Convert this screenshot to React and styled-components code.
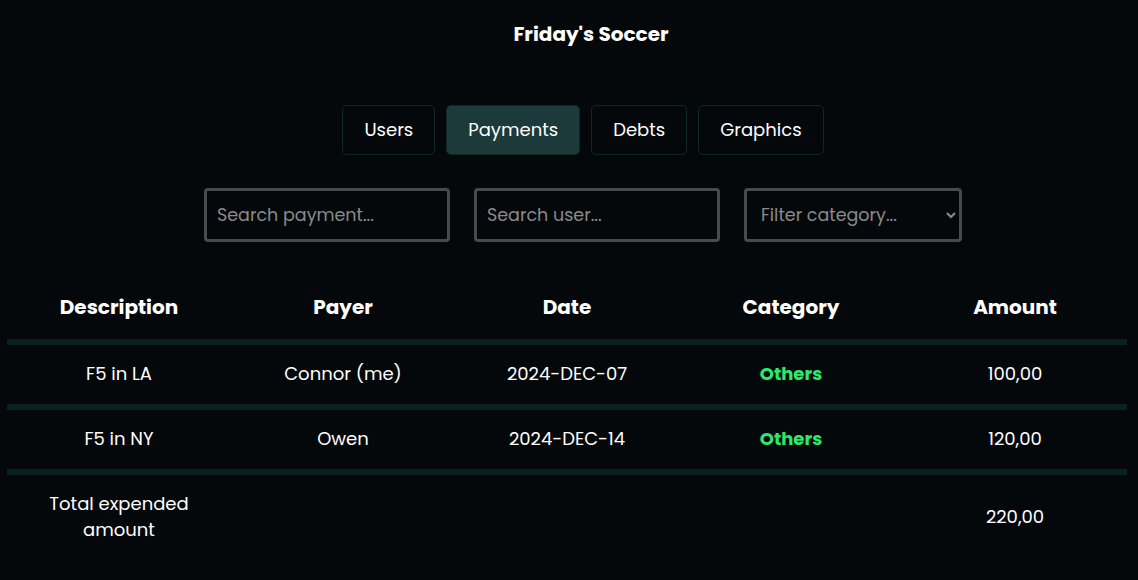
import React, { useState } from "react";
import styled, { createGlobalStyle } from "styled-components";

const GlobalStyle = createGlobalStyle`
  body {
    margin: 0;
    background: #05080b;
    color: #ffffff;
    font-family: "Poppins", "Inter", "Noto Sans", sans-serif;
  }
`;

const tabsList = ["Users", "Payments", "Debts", "Graphics"];

const paymentsList = [
  { id: 0, description: "F5 in LA", payer: "Connor (me)", date: "2024-DEC-07", category: "Others", amount: "100,00" },
  { id: 1, description: "F5 in NY", payer: "Owen", date: "2024-DEC-14", category: "Others", amount: "120,00" },
];

const App = () => {
  const [active, setActive] = useState("Payments");

  return (
    <Page>
      <GlobalStyle />
      <Title>Friday's Soccer</Title>
      <Controls>
        <Tabs>
          {tabsList.map((tab) => (
            <TabButton key={tab} active={tab === active} onClick={() => setActive(tab)}>
              {tab}
            </TabButton>
          ))}
        </Tabs>
        <Filters>
          <SearchInput placeholder="Search payment..." />
          <SearchInput placeholder="Search user..." />
          <CategorySelect defaultValue="">
            <option value="">Filter category...</option>
            <option value="others">Others</option>
          </CategorySelect>
        </Filters>
      </Controls>
      <Table>
        <thead>
          <Row>
            <HeadCell>Description</HeadCell>
            <HeadCell>Payer</HeadCell>
            <HeadCell>Date</HeadCell>
            <HeadCell>Category</HeadCell>
            <HeadCell>Amount</HeadCell>
          </Row>
        </thead>
        <tbody>
          {paymentsList.map((payment) => (
            <Row key={payment.id}>
              <Cell>{payment.description}</Cell>
              <Cell>{payment.payer}</Cell>
              <Cell>{payment.date}</Cell>
              <Cell category>{payment.category}</Cell>
              <Cell>{payment.amount}</Cell>
            </Row>
          ))}
          <tr>
            <TotalCell>Total expended<br />amount</TotalCell>
            <TotalCell />
            <TotalCell />
            <TotalCell />
            <TotalCell>220,00</TotalCell>
          </tr>
        </tbody>
      </Table>
    </Page>
  );
};

const Page = styled.div`
  min-height: 580px;
  padding-top: 20px;
  box-sizing: border-box;
`;

const Title = styled.h1`
  margin: 0;
  padding-left: 44px;
  text-align: center;
  font-size: 20px;
  line-height: 28px;
  font-weight: 700;
`;

const Controls = styled.div`
  display: flex;
  flex-direction: column;
  align-items: center;
  padding-left: 28px;
  margin-top: 57px;
  gap: 33px;
`;

const Tabs = styled.div`
  display: flex;
  gap: 11px;
`;

const TabButton = styled.button`
  height: 50px;
  margin: 0;
  padding: 0 21px;
  border: 1px solid #0f2826;
  border-radius: 5px;
  background: ${(props) => (props.active ? "#1c3a39" : "transparent")};
  color: #ffffff;
  font-family: inherit;
  font-size: 18px;
  line-height: 26px;
  cursor: pointer;
`;

const Filters = styled.div`
  display: flex;
  gap: 24px;
`;

const SearchInput = styled.input`
  width: 246px;
  height: 54px;
  margin: 0;
  box-sizing: border-box;
  padding: 0 10px;
  border: 3px solid #4a4a4c;
  border-radius: 4px;
  background: transparent;
  color: #ffffff;
  font-family: inherit;
  font-size: 17.5px;
  outline: none;

  &::placeholder {
    color: #8a8a8a;
  }
`;

const CategorySelect = styled.select`
  width: 218px;
  height: 54px;
  margin: 0;
  box-sizing: border-box;
  padding: 0 8px 0 10px;
  border: 3px solid #4a4a4c;
  border-radius: 4px;
  background: #05080b;
  color: #8a8a8a;
  font-family: inherit;
  font-size: 17.5px;
  color-scheme: dark;
  outline: none;
`;

const Table = styled.table`
  width: 1120px;
  margin: 38px 0 0 7px;
  border-collapse: collapse;
  table-layout: fixed;
`;

const Row = styled.tr`
  border-bottom: 6px solid #0a2121;
`;

const HeadCell = styled.th`
  padding: 12px 8px 17px;
  font-size: 20px;
  line-height: 30px;
  font-weight: 700;
  text-align: center;
`;

const Cell = styled.td`
  padding: 15px 8px 17px;
  font-size: 18px;
  line-height: 27px;
  text-align: center;
  color: ${(props) => (props.category ? "#2ee86c" : "#ffffff")};
  font-weight: ${(props) => (props.category ? 700 : 400)};
`;

const TotalCell = styled(Cell)`
  padding-top: 16px;
  line-height: 26px;
`;

export default App;
